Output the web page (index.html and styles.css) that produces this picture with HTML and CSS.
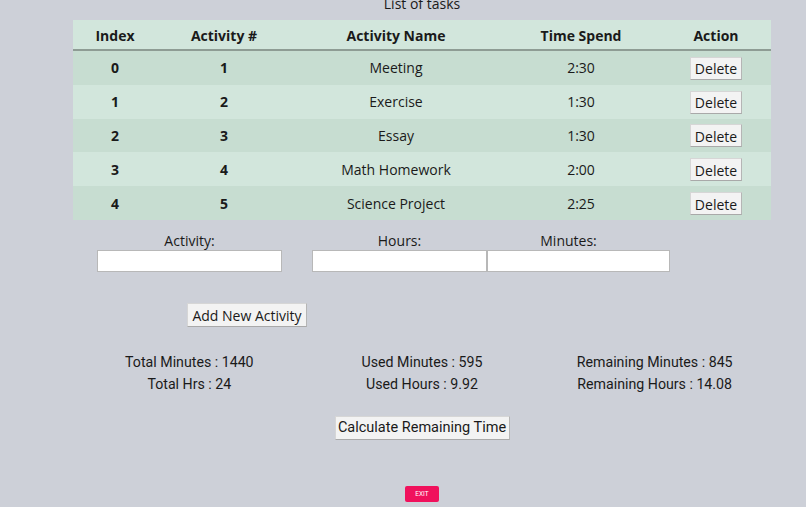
FILE: index.html
```html
<!DOCTYPE html>
<html>
<head>
<meta charset="utf-8">
<link rel="stylesheet" href="styles.css">
</head>
<body>
<div class="page">
  <h2 class="title">List of tasks</h2>
  <table class="tasks">
    <thead>
      <tr><th>Index</th><th>Activity #</th><th>Activity Name</th><th>Time Spend</th><th>Action</th></tr>
    </thead>
    <tbody>
      <tr><td class="b">0</td><td class="b">1</td><td>Meeting</td><td>2:30</td><td><button class="btn del">Delete</button></td></tr>
      <tr><td class="b">1</td><td class="b">2</td><td>Exercise</td><td>1:30</td><td><button class="btn del">Delete</button></td></tr>
      <tr><td class="b">2</td><td class="b">3</td><td>Essay</td><td>1:30</td><td><button class="btn del">Delete</button></td></tr>
      <tr><td class="b">3</td><td class="b">4</td><td>Math Homework</td><td>2:00</td><td><button class="btn del">Delete</button></td></tr>
      <tr><td class="b">4</td><td class="b">5</td><td>Science Project</td><td>2:25</td><td><button class="btn del">Delete</button></td></tr>
    </tbody>
  </table>

  <div class="form">
    <div class="field f-act"><label>Activity:</label><input type="text"></div>
    <div class="field f-hrs"><label>Hours:</label><input type="text"></div>
    <div class="field f-min"><label>Minutes:</label><input type="text"></div>
  </div>

  <div class="add-row"><button class="btn add">Add New Activity</button></div>

  <div class="stats">
    <div class="stat"><p>Total Minutes : 1440</p><p>Total Hrs : 24</p></div>
    <div class="stat"><p>Used Minutes : 595</p><p>Used Hours : 9.92</p></div>
    <div class="stat"><p>Remaining Minutes : 845</p><p>Remaining Hours : 14.08</p></div>
  </div>

  <div class="calc-row"><button class="btn calc">Calculate Remaining Time</button></div>

  <div class="exit-row"><button class="exit">EXIT</button></div>
</div>
</body>
</html>
```
FILE: styles.css
```css
html, body {
  margin: 0;
  padding: 0;
  background: #cdd0d8;
  height: 100%;
  overflow: hidden;
}
body {
  font-family: "Open Sans", "Noto Sans", sans-serif;
  color: #1a1a1a;
}
.page {
  width: 698px;
  margin: 0 0 0 73px;
  display: flex;
  flex-direction: column;
}
.title {
  margin: -6px 0 0;
  height: 26px;
  font-size: 14px;
  font-weight: normal;
  text-align: center;
  line-height: 20px;
}
.tasks {
  width: 698px;
  border-collapse: collapse;
  font-size: 14px;
}
.tasks th {
  background: #d2e6dc;
  height: 30px;
  font-weight: 700;
  font-size: 14px;
  border-bottom: 2px solid #8e9c94;
  padding: 1px 0 0;
  box-sizing: border-box;
}
.tasks td {
  text-align: center;
  height: 33.8px;
  padding: 0;
}
.tasks td.b { font-weight: 700; }
.tasks tbody tr:nth-child(odd) td { background: #c7ddd1; }
.tasks tbody tr:nth-child(even) td { background: #d2e6dc; }
.tasks th:nth-child(1), .tasks td:nth-child(1) { width: 84px; }
.tasks th:nth-child(2), .tasks td:nth-child(2) { width: 134px; }
.tasks th:nth-child(3), .tasks td:nth-child(3) { width: 210px; }
.tasks th:nth-child(4), .tasks td:nth-child(4) { width: 160px; }
.tasks th:nth-child(5), .tasks td:nth-child(5) { width: 110px; }

.btn {
  font-family: "Open Sans", "Noto Sans", sans-serif;
  font-size: 14px;
  color: #1a1a1a;
  background: #f3f3f3;
  border: 1px solid #d6d6d6;
  border-right-color: #b5b5b5;
  border-bottom-color: #a9a9a9;
  padding: 0;
  border-radius: 0;
}
.del {
  width: 52px;
  height: 23px;
  margin-top: 1px;
  padding-top: 1px;
}

.form {
  display: flex;
  align-items: flex-end;
  margin-top: 11px;
}
.field {
  display: flex;
  flex-direction: column;
  align-items: center;
}
.field label {
  font-size: 14px;
  line-height: 19px;
}
.field input {
  height: 22px;
  box-sizing: border-box;
  border: 1px solid #b8b8b8;
  background: #fff;
  margin: 0;
  padding: 0;
}
.f-act { margin-left: 24px; }
.f-act input { width: 185px; }
.f-hrs { margin-left: 30px; }
.f-hrs input { width: 175px; }
.f-min input { width: 183px; }
.f-min label { position: relative; left: -10px; }

.add-row {
  margin-top: 31px;
  padding-left: 114px;
}
.add {
  height: 24px;
  width: 120px;
  padding-top: 1px;
}

.stats {
  display: grid;
  grid-template-columns: repeat(3, 1fr);
  margin-top: 24px;
  font-family: Roboto, sans-serif;
  font-size: 14.2px;
  text-align: center;
}
.stat p {
  margin: 0;
  line-height: 22px;
}
.calc-row {
  display: flex;
  justify-content: center;
  margin-top: 21px;
}
.calc {
  font-family: Roboto, sans-serif;
  font-size: 14.5px;
  height: 24px;
  width: 175px;
}
.exit-row {
  display: flex;
  justify-content: center;
  margin-top: 46px;
}
.exit {
  width: 34px;
  height: 16px;
  background: #f0115c;
  color: #fff;
  border: none;
  border-radius: 2px;
  font-family: Roboto, sans-serif;
  font-size: 6.5px;
  padding: 0;
}
```
